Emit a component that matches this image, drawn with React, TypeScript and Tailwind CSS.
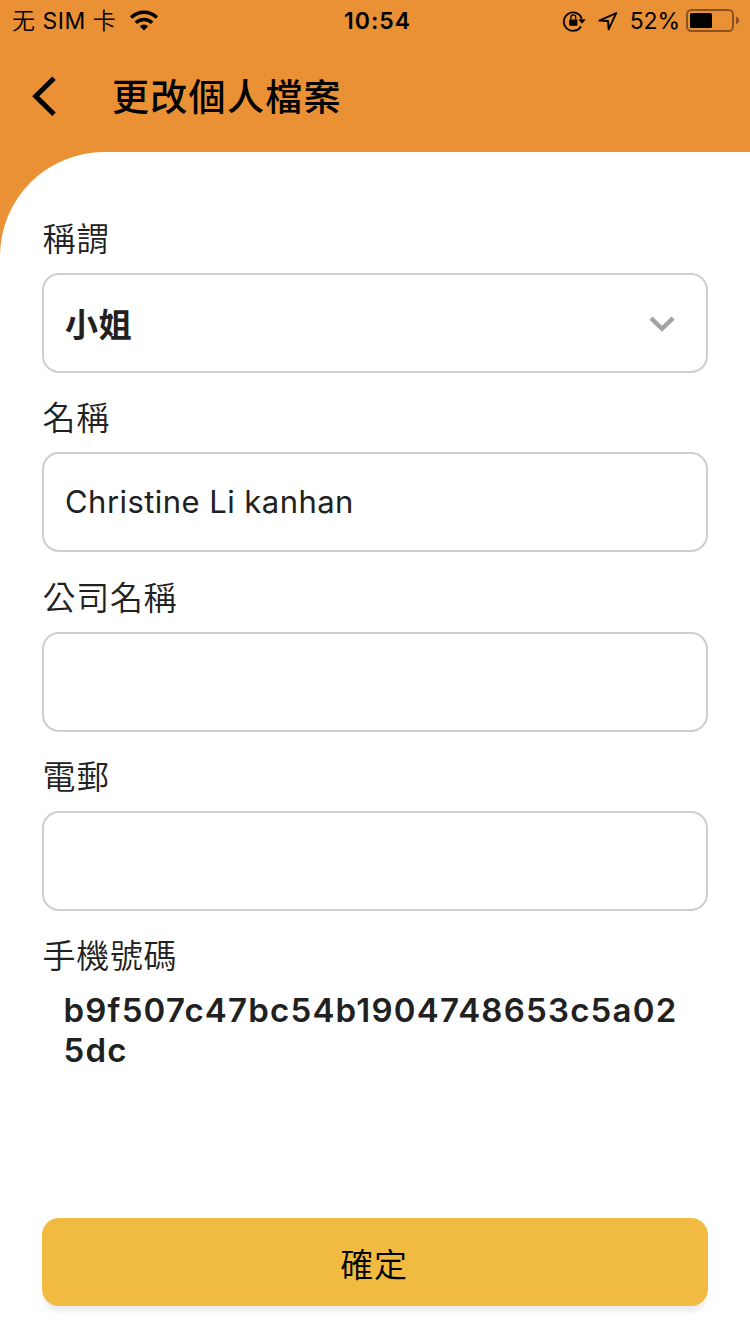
import React from "react";

const fontStack = "font-['Inter','Noto_Sans_CJK_TC',sans-serif]";

function WifiIcon() {
  return (
    <svg className="ml-[13px] h-[22px] w-[30px]" viewBox="0 0 30 22" fill="none" stroke="#000">
      <path d="M2.2 7.6a18 18 0 0 1 25.6 0" strokeWidth="3.6" />
      <path d="M6.8 12.8a11.6 11.6 0 0 1 16.4 0" strokeWidth="3.5" />
      <path d="M10.9 16.2a5.8 5.8 0 0 1 8.2 0L15 20.6z" fill="#000" stroke="none" />
    </svg>
  );
}

function RotationLockIcon() {
  return (
    <svg className="h-[22px] w-[24px]" viewBox="0 0 24 22" fill="none" stroke="#000">
      <path d="M19 16.2A9.2 9.2 0 1 1 19.7 8.6" strokeWidth="1.8" />
      <path d="M16.2 9.3h7.6L20 13.7z" fill="#000" stroke="none" />
      <rect x="7.2" y="9.4" width="8.2" height="6.4" rx="0.8" fill="#000" stroke="none" />
      <path d="M8.9 9.6V7.3a2.4 2.4 0 0 1 4.8 0v2.3" strokeWidth="1.3" />
    </svg>
  );
}

function LocationIcon() {
  return (
    <svg className="ml-[12px] h-[20px] w-[20px]" viewBox="0 0 20 20" fill="none" stroke="#000">
      <path d="M1.4 9.6 18.2 2.1 10.6 18.3l-.5-8.3z" strokeWidth="1.9" strokeLinejoin="round" />
    </svg>
  );
}

function BatteryIcon() {
  return (
    <svg className="ml-[6px] h-[24px] w-[54px]" viewBox="0 0 54 24" fill="none">
      <rect x="1" y="1" width="46" height="21" rx="4.5" stroke="#000" strokeOpacity="0.42" strokeWidth="2" />
      <rect x="4" y="4" width="22" height="15" rx="1.5" fill="#000" />
      <path d="M50 7.6c4 1.6 4 6.4 0 8z" fill="#000" fillOpacity="0.42" />
    </svg>
  );
}

function StatusBar() {
  return (
    <div className="grid h-10 grid-cols-3 items-center pl-3 pr-[10px] text-[23px] leading-10 text-black">
      <div className="flex items-center">
        <span className="whitespace-pre pt-px font-['Inter','Noto_Sans_CJK_SC',sans-serif] font-[350] tracking-[0.5px]">
          无<span className="font-normal"> SIM </span>卡
        </span>
        <WifiIcon />
      </div>
      <div className="pl-[3px] pt-px text-center font-semibold tracking-[1px]">10:54</div>
      <div className="flex items-center justify-end">
        <RotationLockIcon />
        <LocationIcon />
        <span className="ml-3 pt-px tracking-[-0.1px]">52%</span>
        <BatteryIcon />
      </div>
    </div>
  );
}

function Label({ text }: { text: string }) {
  return <div className="h-[46px] pt-px pl-[0.5px] text-[33px] font-[350] leading-[46px] tracking-[0.7px]">{text}</div>;
}

function Field({ label, children }: { label: string; children?: React.ReactNode }) {
  return (
    <div className="mb-[21.3px]">
      <Label text={label} />
      <div className="mt-[12px] flex h-[100px] items-center justify-between rounded-[17px] border-2 border-[#cecece] pl-[22px] pr-[30px] text-[32px]">
        {children}
      </div>
    </div>
  );
}

export default function App() {
  return (
    <div className={`flex h-[1334px] w-[750px] flex-col overflow-hidden bg-[#ea9035] text-[#212121] ${fontStack}`}>
      <StatusBar />
      <header className="flex h-28 shrink-0 items-center pl-8 text-black">
        <svg className="h-10 w-6" viewBox="0 0 24 40" fill="none" stroke="#000" strokeWidth="5">
          <path d="M22 2.3 3.7 20.3 22 38.3" />
        </svg>
        <h1 className="ml-[56px] pt-[4px] text-[37px] font-medium tracking-[1.3px]">更改個人檔案</h1>
      </header>
      <main className="flex min-h-0 flex-1 flex-col rounded-tl-[104px] bg-white px-[42px] pt-[63px]">
        <Field label="稱謂">
          <span className="ml-[-1px] pt-[5px] text-[33px] font-bold tracking-[0.7px]">小姐</span>
          <svg className="mt-px h-4 w-7" viewBox="0 0 28 16" fill="none" stroke="#a3a3a3" strokeWidth="4.4">
            <path d="M3 2.2 14 12.8 25 2.2" />
          </svg>
        </Field>
        <Field label="名稱">
          <span className="ml-[-1px] text-[31px] tracking-[0.45px]">Christine Li kanhan</span>
        </Field>
        <Field label="公司名稱" />
        <Field label="電郵" />
        <Label text="手機號碼" />
        <div className="mt-3 pl-[21.5px] text-[33px] font-semibold leading-10 tracking-[1.2px]">
          <div>b9f507c47bc54b1904748653c5a02</div>
          <div>5dc</div>
        </div>
        <button className="mt-auto mb-7 h-[88px] shrink-0 rounded-[17px] bg-[#f1bb41] pr-[2px] pt-[7px] text-[33px] font-[350] tracking-[0.7px] text-black shadow-[0_8px_4px_-2px_#ededed]">
          確定
        </button>
      </main>
    </div>
  );
}
